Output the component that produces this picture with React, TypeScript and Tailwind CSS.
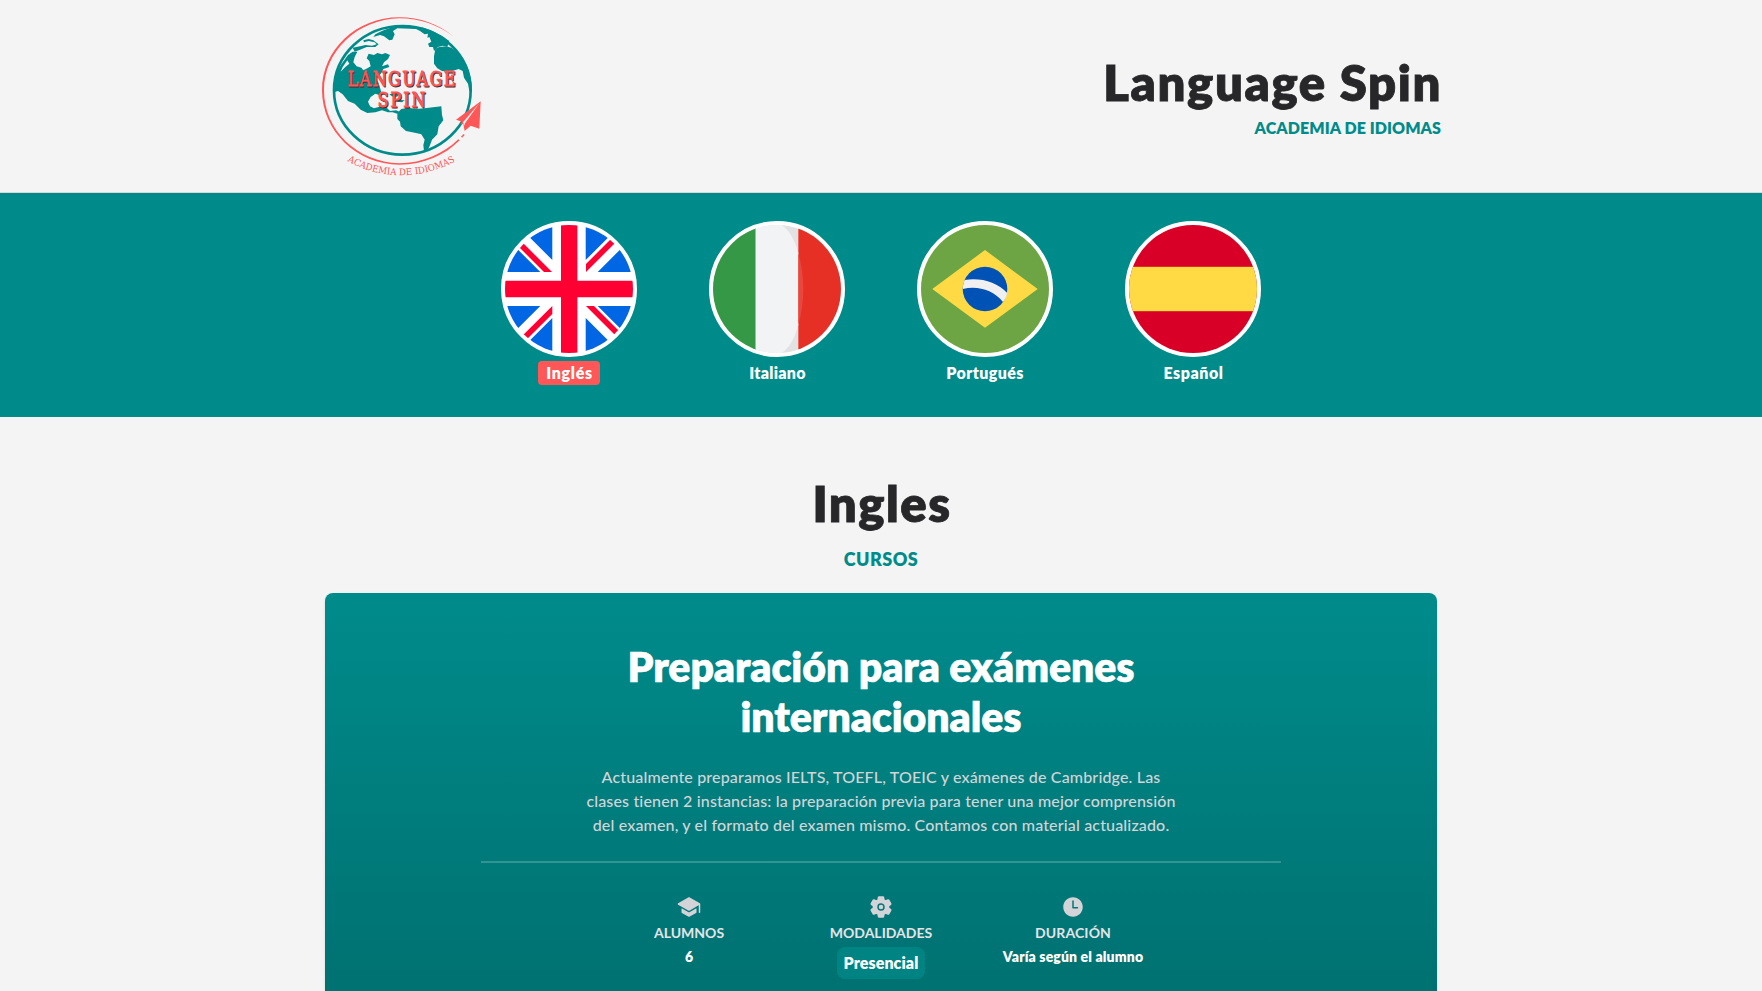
import React from "react";
import { IoSchool, IoSettings, IoTime } from "react-icons/io5";

const orbit =
  "M432 95 C385 58 330 37 268 37 C140 37 36 134 36 256 C36 378 140 479 268 479 C342 479 404 451 449 406 L445 403 C400 446 340 474 268 475 C142 472 42 376 42 256 C42 138 143 43 268 40 C330 40 384 60 432 95 Z";

function Logo() {
  return (
    <svg viewBox="0 0 540 540" className="size-45" aria-label="Language Spin">
      <defs>
        <path id="motto" d="M112 468 A330 330 0 0 0 440 466" />
      </defs>
      <path d={orbit} fill="#ff5757" />
      <path d="M453 395 L461 387 L464 390 L456 398 Z" fill="#ff5757" />
      <g fill="#008b8b">
        <path d="M196 88 C225 70 262 62 290 63 L340 68 C375 80 398 92 418 108 L412 126 L398 122 L384 126 L372 138 L369 126 L358 126 L354 116 L364 110 L358 96 L352 98 L354 86 L344 88 L330 78 L318 72 L262 70 L249 78 L254 88 L247 104 L238 106 L222 94 L210 90 L190 96 Z" />
        <path d="M376 132 C390 122 410 124 424 128 L448 146 C466 168 478 194 484 232 L486 262 L478 258 L474 236 L462 218 L458 198 L446 192 L420 200 L396 198 L382 190 L372 176 L372 154 Z" />
        <path d="M128 128 L150 124 L166 120 L186 122 L200 118 L194 112 L176 108 L162 112 L160 106 L176 102 L190 106 L206 118 L196 126 L170 126 L150 134 L134 140 Z" />
        <path
          d="M72 262 C70 228 80 200 94 178 L114 150 L128 140 L142 140 L134 156 L130 172 L140 184 L154 188 L160 196 L172 190 L182 184 L178 168 L170 160 L176 146 L192 150 L202 144 L216 148 L226 144 L240 150 L234 162 L222 172 L216 184 L234 178 L238 186 L220 192 L214 204 L206 214 L198 222 L206 234 L214 262 L208 270 L196 266 L182 276 L174 290 L180 304 L192 310 L206 306 L220 300 L230 308 L240 318 L258 316 L268 320 L262 326 L248 322 L234 322 L216 316 L196 322 L172 324 L152 314 L134 296 L114 288 L98 268 L84 258 Z M112 166 L98 186 L92 200 L106 186 L118 176 Z"
          fillRule="evenodd"
        />
        <path d="M238 268 L256 264 L266 272 L258 276 L246 274 Z M262 284 L284 286 L276 292 L262 290 Z" />
        <path d="M262 324 L274 312 L296 308 L316 312 L344 310 L394 304 L396 330 L400 346 L386 364 L382 388 L366 404 L360 420 L352 438 L342 438 L340 420 L344 404 L334 388 L318 384 L288 378 L272 364 L270 350 L262 342 Z" />
      </g>
      <ellipse cx="277" cy="256" rx="205" ry="193" fill="none" stroke="#008b8b" strokeWidth="8" />
      <path d="M512 289 L438 344 L457 350 L450 356 L460 358 L464 378 L482 362 L508 371 Z" fill="#ff5757" />
      <path d="M509 293 L459 352 L462 362 L466 353 Z" fill="#f4f4f4" />
      <g fontFamily="DejaVu Serif, serif" fontSize="61" strokeWidth="2.4">
        <g fill="#3b2b2f" stroke="#3b2b2f" aria-hidden="true">
          <text transform="translate(116.5 244.5) scale(0.78 1)" textLength="413">LANGUAGE</text>
          <text transform="translate(205.5 309.5) scale(0.78 1)" textLength="184">SPIN</text>
        </g>
        <g fill="#ff5757" stroke="#ff5757">
          <text transform="translate(113.5 242) scale(0.78 1)" textLength="413">LANGUAGE</text>
          <text transform="translate(202.5 307) scale(0.78 1)" textLength="184">SPIN</text>
        </g>
      </g>
      <text fontFamily="DejaVu Serif, serif" fontSize="28" fill="#ff5757">
        <textPath href="#motto" textLength="338" lengthAdjust="spacingAndGlyphs">ACADEMIA DE IDIOMAS</textPath>
      </text>
    </svg>
  );
}

function FlagUK() {
  return (
    <svg viewBox="0 0 128 128" className="size-32 rounded-full">
      <rect width="128" height="128" fill="#fff" />
      <g fill="#0066e4">
        <path d="M0 11.7 L35.3 47 H0 Z M12.3 0 L47.3 35 V0 Z" />
        <path d="M128 11.7 L92.7 47 H128 Z M115.7 0 L80.7 35 V0 Z" />
        <path d="M0 116.3 L35.3 81 H0 Z M12.3 128 L47.3 93 V128 Z" />
        <path d="M128 116.3 L92.7 81 H128 Z M115.7 128 L80.7 93 V128 Z" />
      </g>
      <g fill="#ff0033">
        <path d="M0 0 L47 47 H39 L0 8 Z" />
        <path d="M128 0 L81 47 V39 L120 0 Z" />
        <path d="M0 128 L47.3 81 V89 L8 128 Z" />
        <path d="M128 128 L81 81 H89 L128 120 Z" />
        <path d="M56 0 H72.4 V128 H56 Z M0 55.8 H128 V72.2 H0 Z" />
      </g>
    </svg>
  );
}

function FlagItaly() {
  return (
    <svg viewBox="0 0 128 128" className="size-32 rounded-full">
      <rect width="43" height="128" fill="#359846" />
      <rect x="42.7" width="42.7" height="128" fill="#e2e2e2" />
      <rect x="85.3" width="43" height="128" fill="#e63026" />
      <path d="M42.7 0 H69 C77 6 82 16 85.3 28 V100 C82 112 77 122 69 128 H42.7 Z" fill="#f2f3f5" />
      <path d="M85.3 28 C92 52 92 76 85.3 100 Z" fill="#e9463e" />
    </svg>
  );
}

function FlagBrazil() {
  return (
    <svg viewBox="0 0 128 128" className="size-32 rounded-full">
      <rect width="128" height="128" fill="#6da544" />
      <path d="M11.3 64 L64 25 L116.7 64 L64 102.8 Z" fill="#ffda44" />
      <circle cx="64" cy="64" r="22.3" fill="#0052b4" />
      <path d="M43.6 55 C60 52.5 76 57 86.2 68 C85.8 71.5 84.5 74 82 77 C72 65 57 60.5 41.8 64 C41.8 61 42.4 58 43.6 55 Z" fill="#f0f0f0" />
    </svg>
  );
}

function FlagSpain() {
  return (
    <svg viewBox="0 0 128 128" className="size-32 rounded-full">
      <rect width="128" height="128" fill="#d80027" />
      <rect y="41.8" width="128" height="44.4" fill="#ffda44" />
    </svg>
  );
}

const languages = [
  { name: "Inglés", flag: <FlagUK />, label: "bg-[#ff5757] pr-[7.5px] pl-[8.5px] tracking-[0.7px]" },
  { name: "Italiano", flag: <FlagItaly />, label: "pl-[9px] pr-2 tracking-[0.3px]" },
  { name: "Portugués", flag: <FlagBrazil />, label: "px-2 tracking-[0.4px]" },
  { name: "Español", flag: <FlagSpain />, label: "pl-[9px] pr-2 tracking-[0.55px]" },
];

export default function App() {
  return (
    <div className="h-[991px] overflow-hidden bg-[#f4f4f4] font-[Lato,sans-serif] text-[#27272a]">
      <header className="flex h-[193px] justify-between border-b border-[#d8d8d8] pt-[5px] pr-[320px] pl-[310px]">
        <Logo />
        <div className="flex flex-col items-end pt-[53px]">
          <h1 className="text-[49px] leading-12 font-[800] tracking-[1.6px] [-webkit-text-stroke:0.8px_#27272a]">
            Language Spin
          </h1>
          <p className="mt-[10px] mr-px text-base font-[800] tracking-[0.08px] text-[#008b8b]">ACADEMIA DE IDIOMAS</p>
        </div>
      </header>

      <nav className="flex h-56 justify-center gap-18 bg-[#008b8b] pt-7">
        {languages.map((l) => (
          <div key={l.name} className="flex w-34 flex-col items-center">
            <div className="rounded-full border-4 border-white bg-white">{l.flag}</div>
            <span className={`mt-1 h-6 rounded text-base leading-6 font-[800] text-white ${l.label}`}>
              {l.name}
            </span>
          </div>
        ))}
      </nav>

      <main className="flex flex-col items-center pt-[62px]">
        <h2 className="pl-0.5 text-[49px] leading-12 font-[800] tracking-[1.5px] [-webkit-text-stroke:0.8px_#27272a]">
          Ingles
        </h2>
        <p className="mt-[18px] text-lg font-[800] leading-7 tracking-[0.45px] text-[#008b8b]">CURSOS</p>
        <section className="mt-5 flex h-[560px] w-[1112px] flex-col items-center rounded-lg bg-linear-to-b from-[#008b8b] to-[#006767] pt-[49px] text-center text-white shadow">
          <h3 className="w-[560px] text-[41px] leading-[50px] font-[800] tracking-[-0.08px] [-webkit-text-stroke:0.5px_white]">
            Preparación para exámenes internacionales
          </h3>
          <p className="mt-[23px] w-[600px] text-base leading-6 font-medium tracking-[0.16px] text-[#d4d4d8]">
            Actualmente preparamos IELTS, TOEFL, TOEIC y exámenes de Cambridge. Las
            <br />
            clases tienen 2 instancias: la preparación previa para tener una mejor comprensión
            <br />
            del examen, y el formato del examen mismo. Contamos con material actualizado.
          </p>
          <hr className="mt-6 w-[800px] border-t-2 border-white/20" />
          <div className="mt-8 grid grid-cols-[192px_192px_192px] text-sm">
            <div className="flex flex-col items-center">
              <IoSchool className="size-6 text-[#d4d4d8]" />
              <span className="mt-1 font-bold text-[#e4e4e7]">ALUMNOS</span>
              <span className="mt-1 font-[800]">6</span>
            </div>
            <div className="flex flex-col items-center">
              <IoSettings className="size-6 text-[#d4d4d8]" />
              <span className="mt-1 font-bold text-[#e4e4e7]">MODALIDADES</span>
              <span className="mt-1 h-8 rounded-lg bg-[#008483] px-1.5 text-base leading-8 font-[800] tracking-[0.1px]">
                Presencial
              </span>
            </div>
            <div className="flex flex-col items-center">
              <IoTime className="size-6 text-[#d4d4d8]" />
              <span className="mt-1 font-bold tracking-[0.12px] text-[#e4e4e7]">DURACIÓN</span>
              <span className="mt-1 font-[800] tracking-[0.14px]">Varía según el alumno</span>
            </div>
          </div>
        </section>
      </main>
    </div>
  );
}
